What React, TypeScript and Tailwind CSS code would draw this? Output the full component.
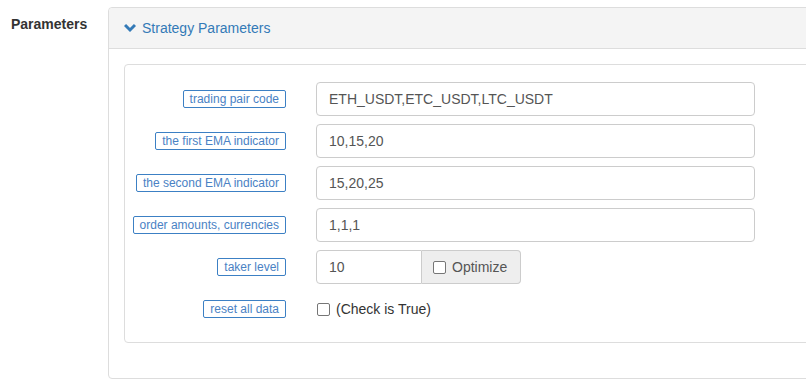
import React from "react";

const rows: { label: string; value: string }[] = [
  { label: "trading pair code", value: "ETH_USDT,ETC_USDT,LTC_USDT" },
  { label: "the first EMA indicator", value: "10,15,20" },
  { label: "the second EMA indicator", value: "15,20,25" },
  { label: "order amounts, currencies", value: "1,1,1" },
];

function Label({ text }: { text: string }) {
  return (
    <span className="inline-block border border-[#3c80c4] rounded-[2px] px-[6px] text-[12px] leading-[16px] text-[#4a82c4]">
      {text}
    </span>
  );
}

function Box() {
  return (
    <span className="inline-block w-[13px] h-[13px] border border-[#767676] rounded-[2px] bg-white shrink-0" />
  );
}

export default function App() {
  return (
    <div
      className="w-[806px] h-[381px] overflow-hidden bg-white flex text-[14px] text-[#333]"
      style={{ fontFamily: '"Liberation Sans", Arial, sans-serif' }}
    >
      <div className="w-[108px] shrink-0 pl-[11px] pt-[14px] font-bold text-[14px] leading-[20px] text-[#333]">
        Parameters
      </div>
      <div className="mt-[7px] w-[740px] shrink-0 self-start border border-[#ddd] rounded-[4px]">
        <div className="h-[41px] bg-[#f4f4f4] border-b border-[#ddd] rounded-t-[4px] px-[15px] flex items-center gap-[6px] text-[#337ab7]">
          <svg width="12" height="10" viewBox="0 0 12 10" className="mt-[-1px]">
            <path d="M1 2 L6 7 L11 2" fill="none" stroke="#337ab7" strokeWidth="3" strokeLinejoin="miter" />
          </svg>
          <span className="text-[14px] leading-[20px]">Strategy Parameters</span>
        </div>
        <div className="p-[15px] pb-[35px]">
          <div className="border border-[#ddd] rounded-[4px] pt-[17px] pb-[16px]">
            <div className="flex flex-col gap-[8px]">
              {rows.map((r) => (
                <div key={r.label} className="flex items-center h-[34px]">
                  <div className="w-[161px] flex justify-end">
                    <Label text={r.label} />
                  </div>
                  <div className="ml-[30px] w-[439px] h-[34px] border border-[#ccc] rounded-[4px] px-[12px] flex items-center text-[14px] text-[#555]">
                    {r.value}
                  </div>
                </div>
              ))}
              <div className="flex items-center h-[34px]">
                <div className="w-[161px] flex justify-end">
                  <Label text="taker level" />
                </div>
                <div className="ml-[30px] flex h-[34px]">
                  <div className="w-[106px] border border-[#ccc] rounded-l-[4px] px-[12px] flex items-center text-[#555]">
                    10
                  </div>
                  <div className="w-[99px] border border-l-0 border-[#ccc] rounded-r-[4px] bg-[#eee] flex items-center pl-[11px] gap-[6px] text-[#555]">
                    <Box />
                    <span>Optimize</span>
                  </div>
                </div>
              </div>
              <div className="flex items-center h-[34px]">
                <div className="w-[161px] flex justify-end">
                  <Label text="reset all data" />
                </div>
                <div className="ml-[31px] flex items-center gap-[6px] text-[#333]">
                  <Box />
                  <span>(Check is True)</span>
                </div>
              </div>
            </div>
          </div>
        </div>
      </div>
    </div>
  );
}
